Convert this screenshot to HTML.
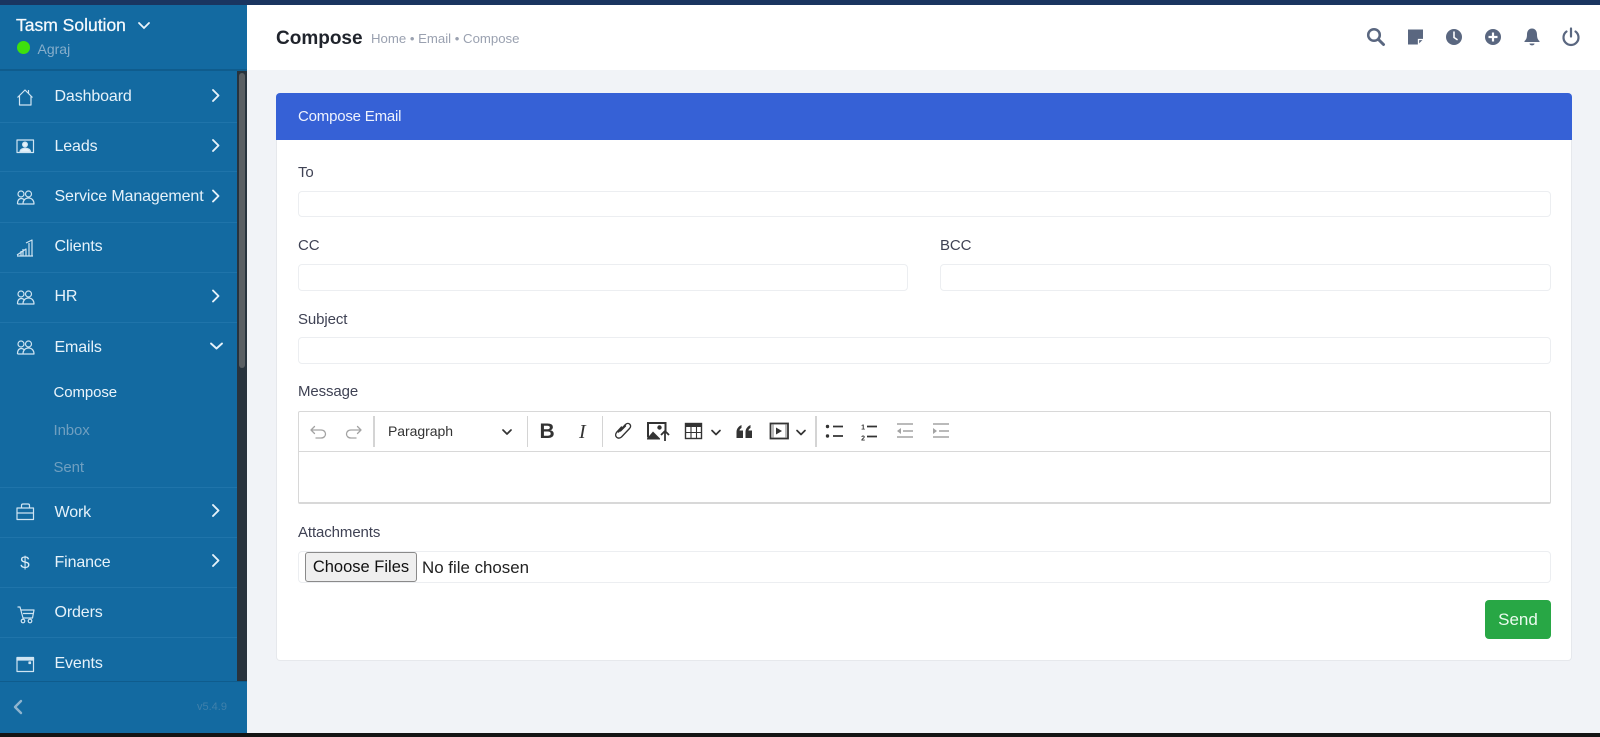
<!DOCTYPE html>
<html><head><meta charset="utf-8"><title>Compose</title>
<style>
html,body{margin:0;padding:0;width:1600px;height:737px;overflow:hidden;background:#f1f3f7;font-family:"Liberation Sans",Arial,sans-serif}
.r{position:absolute}
.t{position:absolute;white-space:nowrap;line-height:20px;height:20px}
.m{color:#e6f2fa;font-size:16px;left:54.5px;letter-spacing:-.12px}
.l{color:#3f4254;font-size:15px;left:298px;letter-spacing:-.1px}
.i{position:absolute;background:#fff;border:1px solid #eceef1;border-radius:4px;box-sizing:border-box}
.sep{position:absolute;background:#1f74aa;height:1px;left:0;width:237px}
.tb{position:absolute;background:#d4d4d4;width:1px;top:416px;height:31px}
svg{position:absolute;left:0;top:0}
</style></head><body>
<div class="r" style="left:0;top:0;width:1600px;height:5px;background:#1a3560"></div>
<div class="r" style="left:247px;top:5px;width:1353px;height:65px;background:#fff"></div>
<div class="r" style="left:0;top:5px;width:247px;height:728px;background:#136aa1"></div>
<div class="r" style="left:0;top:69px;width:247px;height:2px;background:#0f5c8d"></div>
<div class="r" style="left:237px;top:71px;width:10px;height:611px;background:#28333d"></div>
<div class="r" style="left:239px;top:73px;width:6px;height:295px;background:#5a5f63;border-radius:3px"></div>
<div class="r" style="left:0;top:681px;width:247px;height:1px;background:#0f5c8d"></div>
<div class="r" style="left:0;top:733px;width:1600px;height:4px;background:#141414"></div>

<div class="sep" style="top:122px"></div><div class="sep" style="top:171px"></div><div class="sep" style="top:222px"></div><div class="sep" style="top:272px"></div><div class="sep" style="top:322px"></div><div class="sep" style="top:487px"></div><div class="sep" style="top:537px"></div><div class="sep" style="top:587px"></div><div class="sep" style="top:637px"></div>

<div class="t" style="left:16px;top:15px;font-size:17.5px;color:#f6fafd;-webkit-text-stroke:.25px #f6fafd">Tasm Solution</div>
<div class="r" style="left:16.500px;top:41px;width:13px;height:13px;border-radius:50%;background:#3ee00e"></div>
<div class="t" style="left:37.500px;top:39px;font-size:14px;color:#86aecb">Agraj</div>

<div class="t m" style="top:87px">Dashboard</div>
<div class="t m" style="top:137px">Leads</div>
<div class="t m" style="top:187px">Service Management</div>
<div class="t m" style="top:237px">Clients</div>
<div class="t m" style="top:287px">HR</div>
<div class="t m" style="top:337.500px">Emails</div>
<div class="t" style="left:53.500px;top:382.500px;font-size:15px;color:#eaf4fb;letter-spacing:-.1px">Compose</div>
<div class="t" style="left:53.500px;top:420.500px;font-size:15px;color:#6f9fc0;letter-spacing:-.1px">Inbox</div>
<div class="t" style="left:53.500px;top:458px;font-size:15px;color:#6f9fc0;letter-spacing:-.1px">Sent</div>
<div class="t m" style="top:502.500px">Work</div>
<div class="t m" style="top:552.500px">Finance</div>
<div class="t m" style="top:602.500px">Orders</div>
<div class="t m" style="top:653.500px">Events</div>
<div class="t" style="left:17px;top:552px;font-size:17px;color:#dcecf6;width:16px;text-align:center;margin-top:1px">$</div>
<div class="t" style="left:197px;top:697px;font-size:11px;color:#3f80ab">v5.4.9</div>

<div class="t" style="left:276px;top:28.500px;font-size:19px;font-weight:bold;color:#20242c">Compose</div>
<div class="t" style="left:371px;top:28.500px;font-size:13.200px;color:#9aa1b0">Home • Email • Compose</div>

<div class="r" style="left:276px;top:93px;width:1296px;height:568px;background:#fff;border:1px solid #e6e8ec;border-top:0;border-radius:4px;box-sizing:border-box"></div>
<div class="r" style="left:276px;top:93px;width:1296px;height:47px;background:#3661d6;border-radius:4px 4px 0 0"></div>
<div class="t" style="left:298px;top:106.500px;font-size:15px;letter-spacing:-.2px;color:#eef2fd">Compose Email</div>

<div class="t l" style="top:162.500px">To</div>
<div class="i" style="left:298px;top:191px;width:1253px;height:26px"></div>
<div class="t l" style="top:236px">CC</div>
<div class="i" style="left:298px;top:264px;width:610px;height:27px"></div>
<div class="t l" style="top:236px;left:940px">BCC</div>
<div class="i" style="left:940px;top:264px;width:611px;height:27px"></div>
<div class="t l" style="top:309.500px">Subject</div>
<div class="i" style="left:298px;top:337px;width:1253px;height:27px"></div>
<div class="t l" style="top:382px">Message</div>

<div class="r" style="left:298px;top:411px;width:1253px;height:93px;background:#fff;border:1px solid #d8d8d8;border-bottom-width:2px;border-radius:2px;box-sizing:border-box"></div>
<div class="r" style="left:298px;top:451px;width:1253px;height:1px;background:#d8d8d8"></div>
<div class="tb" style="left:373px;width:2px"></div><div class="tb" style="left:527px"></div><div class="tb" style="left:602px"></div><div class="tb" style="left:814.500px;width:2px"></div>
<div class="t" style="left:388px;top:421px;font-size:14px;letter-spacing:-.05px;color:#333">Paragraph</div>
<div class="t" style="left:539.500px;top:421px;font-size:21px;line-height:22px;font-weight:bold;color:#333">B</div>
<div class="t" style="left:579px;top:421px;font-size:20px;line-height:22px;font-style:italic;font-family:'Liberation Serif',serif;color:#333">I</div>

<div class="t l" style="top:522.500px">Attachments</div>
<div class="i" style="left:298px;top:551px;width:1253px;height:32px"></div>
<div class="r" style="left:305px;top:552px;width:112px;height:30px;box-sizing:border-box;background:#efefef;border:1px solid #8a8a8a;border-radius:3px;font-size:16.500px;line-height:29.500px;text-align:center;color:#111">Choose Files</div>
<div class="t" style="left:422px;top:557.500px;font-size:16.900px;color:#222">No file chosen</div>

<div class="r" style="left:1485px;top:599.500px;width:66px;height:39.500px;background:#28a745;border-radius:4px;color:#eafbee;font-size:17px;line-height:40px;text-align:center">Send</div>

<svg width="1600" height="737" viewBox="0 0 1600 737" fill="none">
<path d="M139 23l5 5 5-5" stroke="#eaf4fb" stroke-width="1.800" stroke-linecap="round"/>
<g stroke="#e6f2fa" stroke-width="1.900" stroke-linecap="round" stroke-linejoin="round">
<path d="M213 90l5.500 5.500-5.500 5.500"/><path d="M213 140l5.500 5.500-5.500 5.500"/><path d="M213 190.500l5.500 5.500-5.500 5.500"/><path d="M213 290.500l5.500 5.500-5.500 5.500"/><path d="M211 343.500l5.500 5 5.500-5"/><path d="M213 505l5.500 5.500-5.500 5.500"/><path d="M213 555l5.500 5.500-5.500 5.500"/>
</g>
<g stroke="#8fb4cf" stroke-width="2.400" stroke-linecap="round" stroke-linejoin="round"><path d="M21 701l-6 6 6 6"/></g>
<g stroke="#cfe4f2" stroke-width="1.200" stroke-linejoin="round">
<path d="M17.500 97.500l7.500-7.500 7.500 7.500M19.500 96v9h11.500v-9M28.500 90v3.500"/>
<path d="M17 140h16.500v12.500H17z"/><circle cx="25" cy="144.500" r="2.400" fill="#e6f2fa"/><path d="M20 152c0-5 10.500-5 10.500 0z" fill="#e6f2fa"/>
<g id="ppl"><circle cx="21" cy="194" r="3"/><circle cx="28.500" cy="194" r="3"/><path d="M17.500 204c0-3 1-5.500 4-5.500 1.500 0 2.500 1 3 1.500M17.500 204h6M23 204c0-3.500 2-6 5.500-6s5.500 2.500 5.500 6z"/></g>
<use href="#ppl" y="100"/><use href="#ppl" y="150"/>
<path d="M17 255l9-6v7M26 243l6-3v16M17 256h16M21 251v5M23 249v7M29 243v13"/>
<path d="M17 508h16.500v11.500H17zM21.500 508v-2.500c0-1 .5-1.500 1.500-1.500h5c1 0 1.500.5 1.500 1.500v2.500M17 513h16.500"/>
<path d="M17.500 607h2.500l3 11h9.500l1.500-8H20.500M23 613.500h10M23.500 618l-1 2"/><circle cx="23" cy="621" r="1.800"/><circle cx="30" cy="621" r="1.800"/>
<path d="M17 658h16.500v13.500H17z"/><path d="M17 657.500h16.500v2.500H17z" fill="#cfe4f2"/><path d="M29 662h1.500v1.500H29z" fill="#cfe4f2"/>
</g>
<circle cx="1374" cy="35" r="5.800" stroke="#5a6780" stroke-width="2.500"/><path d="M1378.500 39.500l5 5" stroke="#5a6780" stroke-width="3" stroke-linecap="round"/>
<path d="M1408 29.500h15v10l-5 5h-10z" fill="#5a6780"/><path d="M1418.500 44.500v-5h4.500" stroke="#fff" stroke-width="1.300"/>
<circle cx="1454" cy="37" r="8" fill="#5a6780"/><path d="M1454 32v5.500l3 2" stroke="#fff" stroke-width="1.600" stroke-linecap="round"/>
<circle cx="1493" cy="37" r="8" fill="#5a6780"/><path d="M1493 32.500v9M1488.500 37h9" stroke="#fff" stroke-width="2.200"/>
<path d="M1532 28.500c-3.500 0-5 3-5 6 0 3.500-1 5.500-2.500 6.500v1h15v-1c-1.500-1-2.500-3-2.500-6.500 0-3-1.500-6-5-6z" fill="#5a6780"/><path d="M1529.500 43.500h5c0 2.500-5 2.500-5 0z" fill="#5a6780"/>
<path d="M1566.500 31.500a7.500 7.500 0 1 0 9 0" stroke="#5a6780" stroke-width="2.200" stroke-linecap="round"/><path d="M1571 28.500v8" stroke="#5a6780" stroke-width="2.200" stroke-linecap="round"/>
<g stroke="#a3a3a3" stroke-width="1.300" stroke-linecap="round" stroke-linejoin="round">
<path d="M311 430h10c3 0 4.500 2 4.500 4s-1.500 4-4.500 4h-5M314.500 426.500l-3.500 3.500 3.500 3.500"/>
<path d="M361 430h-10c-3 0-4.500 2-4.500 4s1.500 4 4.500 4h5M357.500 426.500l3.500 3.500-3.500 3.500"/>
</g>
<g stroke="#333" stroke-width="1.700" stroke-linecap="round" stroke-linejoin="round">
<path d="M503 430l4 4 4-4"/><path d="M712 430.500l4 4 4-4"/><path d="M797 430.500l4 4 4-4"/>
</g>
<g stroke="#333" stroke-width="1.400" stroke-linecap="round">
<path d="M618.500 432l7-7.500c3-3 7 1 4 4l-8 8.500c-4 3-7.500-1-5-4.500l5-5.500"/>
<path d="M620.500 431l5-5"/>
</g>
<path d="M647 422h19.500v9h-2v-7h-15.500v13.500h-2z" fill="#333"/><path d="M647 438.500l6-7 5 5 2 2v1h-13z" fill="#333"/><circle cx="659.500" cy="427.500" r="2.200" fill="#333"/>
<path d="M665 441v-9.500M661 435l4-4 4 4" stroke="#333" stroke-width="1.800"/>
<rect x="685.500" y="423.500" width="16" height="15" stroke="#333" stroke-width="1.400"/><path d="M685 423h17v4h-17z" fill="#333"/><path d="M685.500 432.500h16M691 427v11M696.500 427v11" stroke="#333" stroke-width="1.100"/>
<path d="M736.500 438v-6c0-3.500 2.500-6 5-7v3c-1.200.6-2 1.500-2 2.500H743v7.500zM745.500 438v-6c0-3.500 2.500-6 5-7v3c-1.200.6-2 1.500-2 2.500h3.500v7.500z" fill="#333"/>
<rect x="770.500" y="423.500" width="17.500" height="15" stroke="#333" stroke-width="1.800"/><path d="M776 427.500v7l6-3.500z" fill="#333"/><path d="M773 424v14M786 424v14" stroke="#777" stroke-width="1"/>
<g stroke="#333" stroke-width="1.700"><path d="M833 426.500h10M833 436h10M867 426.500h10M867 436.500h10"/></g>
<circle cx="827.500" cy="426.500" r="1.700" fill="#333"/><circle cx="827.500" cy="436" r="1.700" fill="#333"/>
<text x="865" y="429.500" font-family="Liberation Sans" font-size="7" font-weight="bold" fill="#333" text-anchor="end">1</text>
<text x="865" y="440.500" font-family="Liberation Sans" font-size="7" font-weight="bold" fill="#333" text-anchor="end">2</text>
<g stroke="#a3a3a3" stroke-width="1.500">
<path d="M897 424h16M903 431h10M897 437h16M933 424h16M939 431h10M933 437h16"/>
</g>
<path d="M901 428v6l-4-3zM933 428v6l4-3z" fill="#a3a3a3"/>
</svg>
</body></html>
